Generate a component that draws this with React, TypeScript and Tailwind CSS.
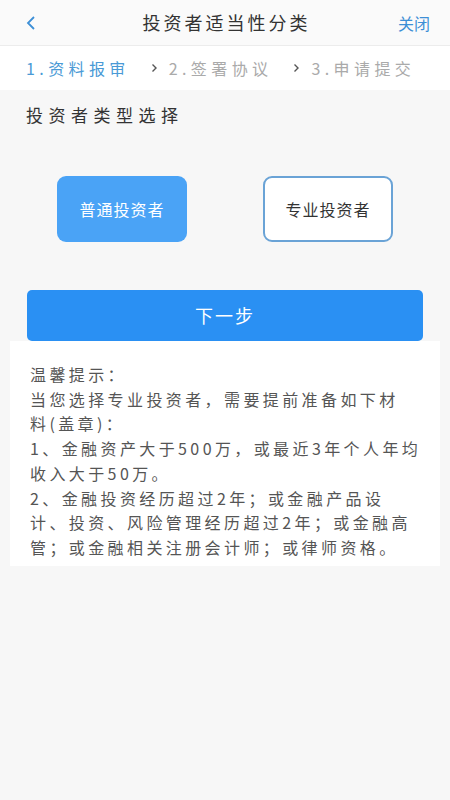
import React from "react";

const lines = [
  "温馨提示：",
  "当您选择专业投资者，需要提前准备如下材",
  "料(盖章)：",
  "1、金融资产大于500万，或最近3年个人年均",
  "收入大于50万。",
  "2、金融投资经历超过2年；或金融产品设",
  "计、投资、风险管理经历超过2年；或金融高",
  "管；或金融相关注册会计师；或律师资格。",
];

function Chevron() {
  return (
    <svg width="7" height="10" viewBox="0 0 7 10" className="ml-[21px] mr-[11px]">
      <path d="M1.5 1.5 L5 5 L1.5 8.5" stroke="#555" strokeWidth="1.4" fill="none" />
    </svg>
  );
}

export default function App() {
  return (
    <div
      className="w-[450px] h-[800px] bg-[#f7f7f7] flex flex-col"
      style={{ fontFamily: '"Noto Sans CJK SC", "Noto Sans", sans-serif' }}
    >
      <div className="h-[46px] bg-[#fafafa] border-b border-[#ececec] flex items-center px-[22px] relative">
        <svg width="14" height="16" viewBox="0 0 14 16" className="ml-[2px]">
          <path d="M10 2 L4 8 L10 14" stroke="#3d8fd6" strokeWidth="1.8" fill="none" />
        </svg>
        <div className="absolute left-0 right-0 pl-[3px] text-center text-[18px] tracking-[3px] text-[#333] pointer-events-none">
          投资者适当性分类
        </div>
        <div className="ml-auto text-[16px] text-[#3d8fd6] mr-[-2px]">关闭</div>
      </div>
      <div className="h-[44px] bg-white flex items-center pl-[26px] text-[16px] tracking-[4.4px] text-[#aaa]">
        <span className="text-[#4a9ad6]">1.资料报审</span>
        <Chevron />
        <span>2.签署协议</span>
        <Chevron />
        <span>3.申请提交</span>
      </div>
      <div className="pl-[26px] pt-[12px] text-[17px] tracking-[5.5px] text-[#333] leading-[26px]">
        投资者类型选择
      </div>
      <div className="flex justify-between px-[57px] mt-[48px]">
        <div className="w-[130px] h-[66px] rounded-[9px] bg-[#4aa3f6] flex items-center justify-center text-white text-[16px] tracking-[1px]">
          普通投资者
        </div>
        <div className="w-[130px] h-[66px] rounded-[9px] bg-white border-2 border-[#6aa3d6] flex items-center justify-center text-[#333] text-[16px] tracking-[1px]">
          专业投资者
        </div>
      </div>
      <div className="mx-[27px] mt-[48px] h-[51px] rounded-[5px] bg-[#2a90f3] flex items-center justify-center text-white text-[18px] tracking-[2px]">
        下一步
      </div>
      <div className="mx-[10px] bg-white px-[20px] pt-[21px] pb-[6px] text-[16px] tracking-[3.4px] text-[#555] leading-[24.7px]">
        {lines.map((l, i) => (
          <div key={i} className="whitespace-nowrap">
            {l}
          </div>
        ))}
      </div>
    </div>
  );
}
